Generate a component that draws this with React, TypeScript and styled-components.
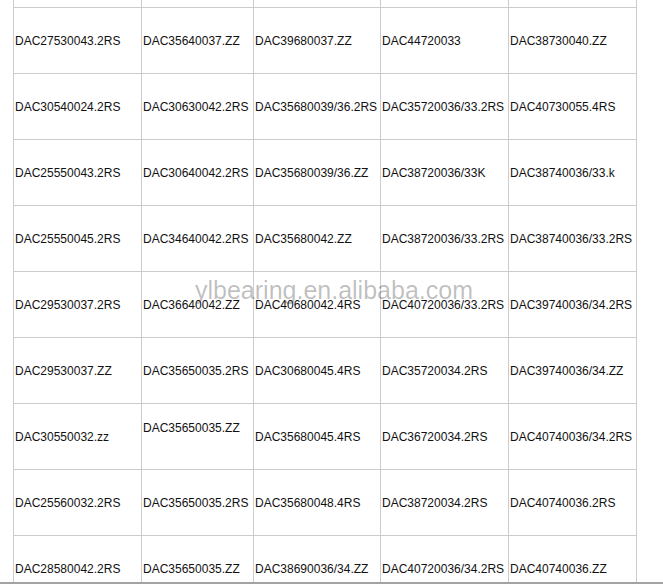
import React from 'react';
import styled, { createGlobalStyle } from 'styled-components';

const GlobalStyle = createGlobalStyle`
  html, body {
    margin: 0;
    padding: 0;
    background: #ffffff;
  }
  body {
    font-family: "Liberation Sans", Arial, sans-serif;
  }
`;

const COLUMN_WIDTHS = [128, 112, 127, 128, 128];

const ROWS: string[][] = [
  ['DAC27530043.2RS', 'DAC35640037.ZZ', 'DAC39680037.ZZ', 'DAC44720033', 'DAC38730040.ZZ'],
  ['DAC30540024.2RS', 'DAC30630042.2RS', 'DAC35680039/36.2RS', 'DAC35720036/33.2RS', 'DAC40730055.4RS'],
  ['DAC25550043.2RS', 'DAC30640042.2RS', 'DAC35680039/36.ZZ', 'DAC38720036/33K', 'DAC38740036/33.k'],
  ['DAC25550045.2RS', 'DAC34640042.2RS', 'DAC35680042.ZZ', 'DAC38720036/33.2RS', 'DAC38740036/33.2RS'],
  ['DAC29530037.2RS', 'DAC36640042.ZZ', 'DAC40680042.4RS', 'DAC40720036/33.2RS', 'DAC39740036/34.2RS'],
  ['DAC29530037.ZZ', 'DAC35650035.2RS', 'DAC30680045.4RS', 'DAC35720034.2RS', 'DAC39740036/34.ZZ'],
  ['DAC30550032.zz', 'DAC35650035.ZZ', 'DAC35680045.4RS', 'DAC36720034.2RS', 'DAC40740036/34.2RS'],
  ['DAC25560032.2RS', 'DAC35650035.2RS', 'DAC35680048.4RS', 'DAC38720034.2RS', 'DAC40740036.2RS'],
  ['DAC28580042.2RS', 'DAC35650035.ZZ', 'DAC38690036/34.ZZ', 'DAC40720036/34.2RS', 'DAC40740036.ZZ'],
];

const RAISED = '6-1';

const App = () => {
  return (
    <>
      <GlobalStyle />
      <Page>
        <Frame>
          <Grid>
            {COLUMN_WIDTHS.map((_, i) => (
              <Cell key={`top-${i}`} $height={8} />
            ))}
            {ROWS.map((row, r) =>
              row.map((text, c) => (
                <Cell key={`${r}-${c}`} $height={66} $raised={`${r}-${c}` === RAISED}>
                  {text}
                </Cell>
              ))
            )}
          </Grid>
        </Frame>
        <Watermark>ylbearing.en.alibaba.com</Watermark>
      </Page>
    </>
  );
};

export default App;

const Page = styled.div`
  position: relative;
  width: 663px;
  height: 585px;
  overflow: hidden;
  background: #ffffff;
`;

const Frame = styled.div`
  height: 582px;
  overflow: hidden;
  padding-left: 13px;
  border-bottom: 2px solid #a3a3a3;
`;

const Grid = styled.div`
  display: grid;
  grid-template-columns: ${COLUMN_WIDTHS.map((w) => `${w}px`).join(' ')};
  width: max-content;
  border-left: 1px solid #cccccc;
`;

const Cell = styled.div<{ $height: number; $raised?: boolean }>`
  box-sizing: border-box;
  height: ${({ $height }) => $height}px;
  display: flex;
  align-items: center;
  padding: 0 0 ${({ $raised }) => ($raised ? '18px' : '0')} 1px;
  border-right: 1px solid #cccccc;
  border-bottom: 1px solid #cccccc;
  font-family: "Liberation Sans", Arial, sans-serif;
  font-size: 12px;
  color: #111111;
  white-space: nowrap;
  overflow: hidden;
`;

const Watermark = styled.div`
  position: absolute;
  left: 195px;
  top: 278px;
  font-family: "Liberation Sans", Arial, sans-serif;
  font-size: 25px;
  line-height: 25px;
  color: rgba(0, 0, 0, 0.26);
  white-space: nowrap;
  pointer-events: none;
`;
